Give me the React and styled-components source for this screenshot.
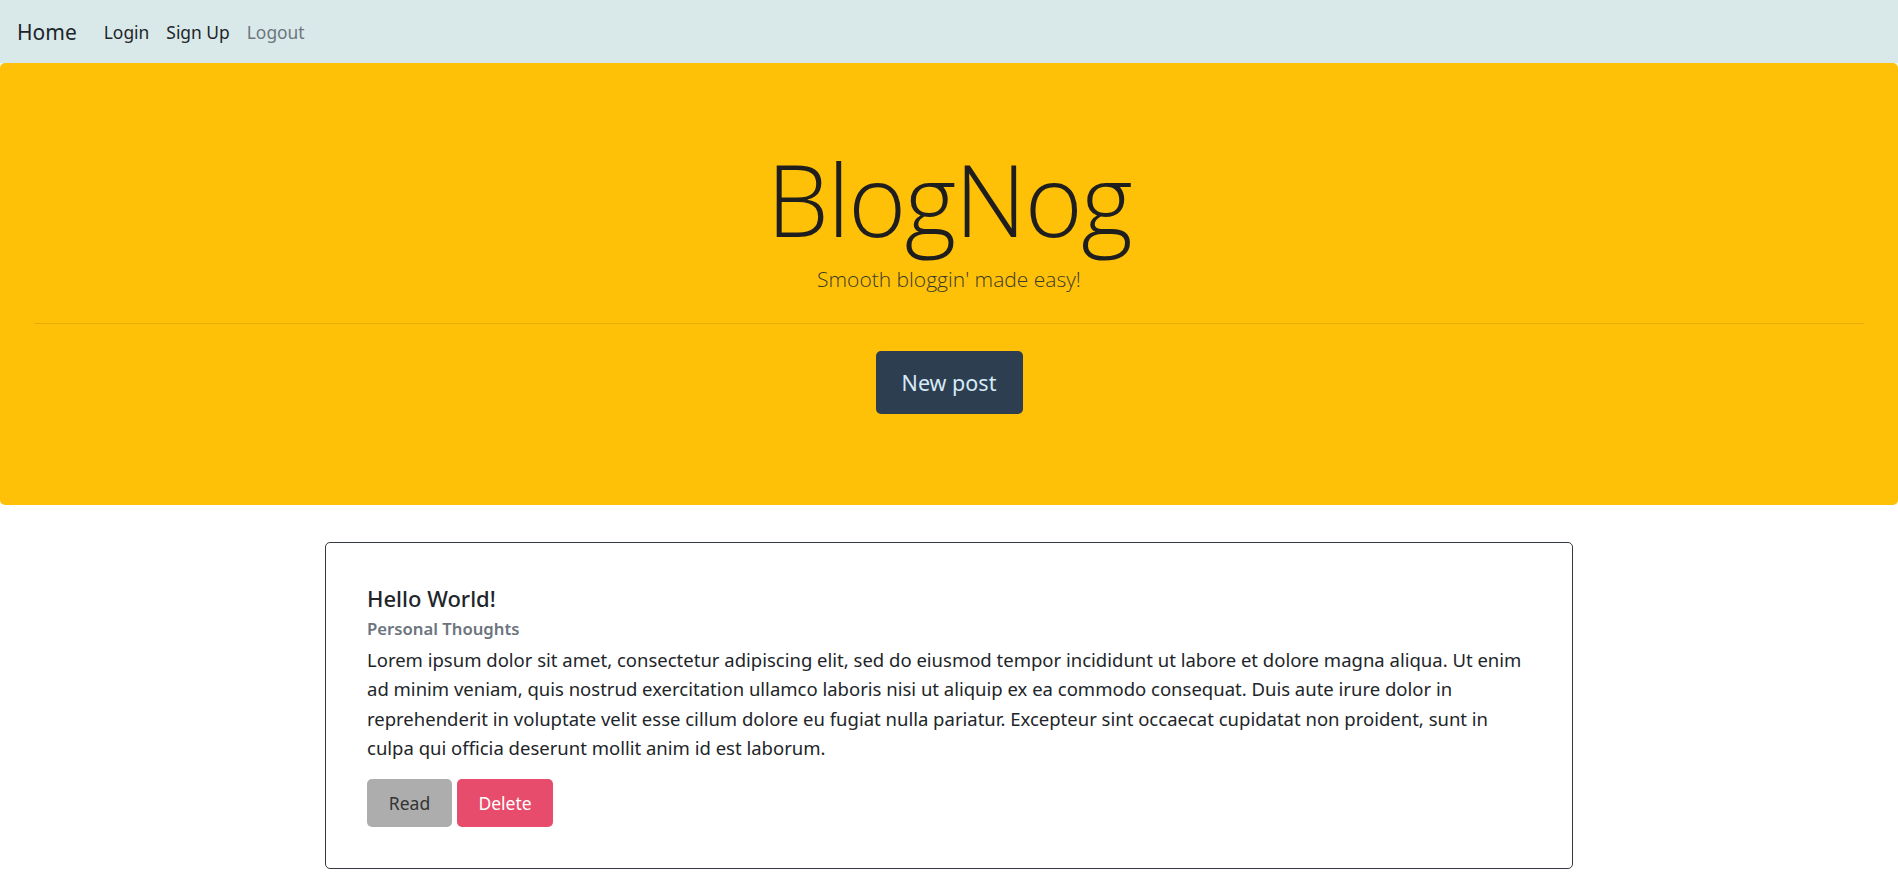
import React from "react";
import styled, { createGlobalStyle } from "styled-components";

const GlobalStyle = createGlobalStyle`
  body {
    margin: 0;
    font-family: "Noto Sans", "Open Sans", sans-serif;
    color: #212529;
    background: #fff;
  }
  * { box-sizing: border-box; }
`;

const Nav = styled.nav`
  height: 63px;
  background: #d9e9e9;
  display: flex;
  align-items: center;
  padding: 0 17px;
  gap: 27px;
`;

const Brand = styled.a`
  font-size: 21px;
  color: #212529;
  text-decoration: none;
`;

const NavLinks = styled.div`
  display: flex;
  gap: 17px;
`;

const NavLink = styled.a`
  font-size: 17.4px;
  text-decoration: none;
  color: ${p => (p.muted ? "#6c757d" : "#212529")};
`;

const Jumbotron = styled.header`
  background: #ffc107;
  border-radius: 5px;
  height: 442px;
  padding: 76px 34px 0;
  display: flex;
  flex-direction: column;
  align-items: center;
`;

const Title = styled.h1`
  margin: 0;
  font-family: "Open Sans", "Noto Sans", sans-serif;
  font-weight: 300;
  font-size: 99px;
  line-height: 120px;
  letter-spacing: -1.5px;
  color: #1e1e1e;
`;

const Lead = styled.p`
  margin: 6px 0 0;
  font-family: "Open Sans", "Noto Sans", sans-serif;
  font-weight: 300;
  font-size: 21px;
  line-height: 28px;
  color: #3a3a2a;
`;

const Rule = styled.hr`
  align-self: stretch;
  border: 0;
  border-top: 1px solid rgba(0, 0, 0, 0.1);
  margin: 30px 0 27px;
`;

const BigButton = styled.button`
  width: 147px;
  height: 63px;
  border: 0;
  border-radius: 5px;
  background: #2c3e50;
  color: #d6eaf8;
  font-family: inherit;
  font-size: 21.5px;
`;

const Main = styled.main`
  display: flex;
  justify-content: center;
  padding-top: 37px;
`;

const Card = styled.article`
  width: 1248px;
  border: 1px solid #343a40;
  border-radius: 5px;
  padding: 42px 41px 41px;
`;

const PostTitle = styled.h5`
  margin: 0 0 6px;
  font-size: 22px;
  font-weight: 500;
  line-height: 26px;
`;

const Category = styled.h6`
  margin: 0 0 4px;
  font-size: 16.7px;
  font-weight: 600;
  line-height: 24px;
  color: #6c757d;
`;

const Body = styled.p`
  margin: 0 0 16px;
  font-size: 18.5px;
  line-height: 29.4px;
`;

const Actions = styled.div`
  display: flex;
  gap: 5px;
`;

const ActionButton = styled.button`
  height: 48px;
  width: ${p => p.w}px;
  border: 0;
  border-radius: 5px;
  font-family: inherit;
  font-size: 17.5px;
  background: ${p => p.bg};
  color: ${p => p.fg};
`;

const lorem =
  "Lorem ipsum dolor sit amet, consectetur adipiscing elit, sed do eiusmod tempor incididunt ut labore et dolore magna aliqua. Ut enim ad minim veniam, quis nostrud exercitation ullamco laboris nisi ut aliquip ex ea commodo consequat. Duis aute irure dolor in reprehenderit in voluptate velit esse cillum dolore eu fugiat nulla pariatur. Excepteur sint occaecat cupidatat non proident, sunt in culpa qui officia deserunt mollit anim id est laborum.";

export default function App() {
  return (
    <>
      <GlobalStyle />
      <Nav>
        <Brand href="#">Home</Brand>
        <NavLinks>
          <NavLink href="#">Login</NavLink>
          <NavLink href="#">Sign Up</NavLink>
          <NavLink href="#" muted>
            Logout
          </NavLink>
        </NavLinks>
      </Nav>
      <Jumbotron>
        <Title>BlogNog</Title>
        <Lead>Smooth bloggin' made easy!</Lead>
        <Rule />
        <BigButton>New post</BigButton>
      </Jumbotron>
      <Main>
        <Card>
          <PostTitle>Hello World!</PostTitle>
          <Category>Personal Thoughts</Category>
          <Body>{lorem}</Body>
          <Actions>
            <ActionButton w={85} bg="#adadad" fg="#333">
              Read
            </ActionButton>
            <ActionButton w={96} bg="#e74c6c" fg="#fff">
              Delete
            </ActionButton>
          </Actions>
        </Card>
      </Main>
    </>
  );
}
